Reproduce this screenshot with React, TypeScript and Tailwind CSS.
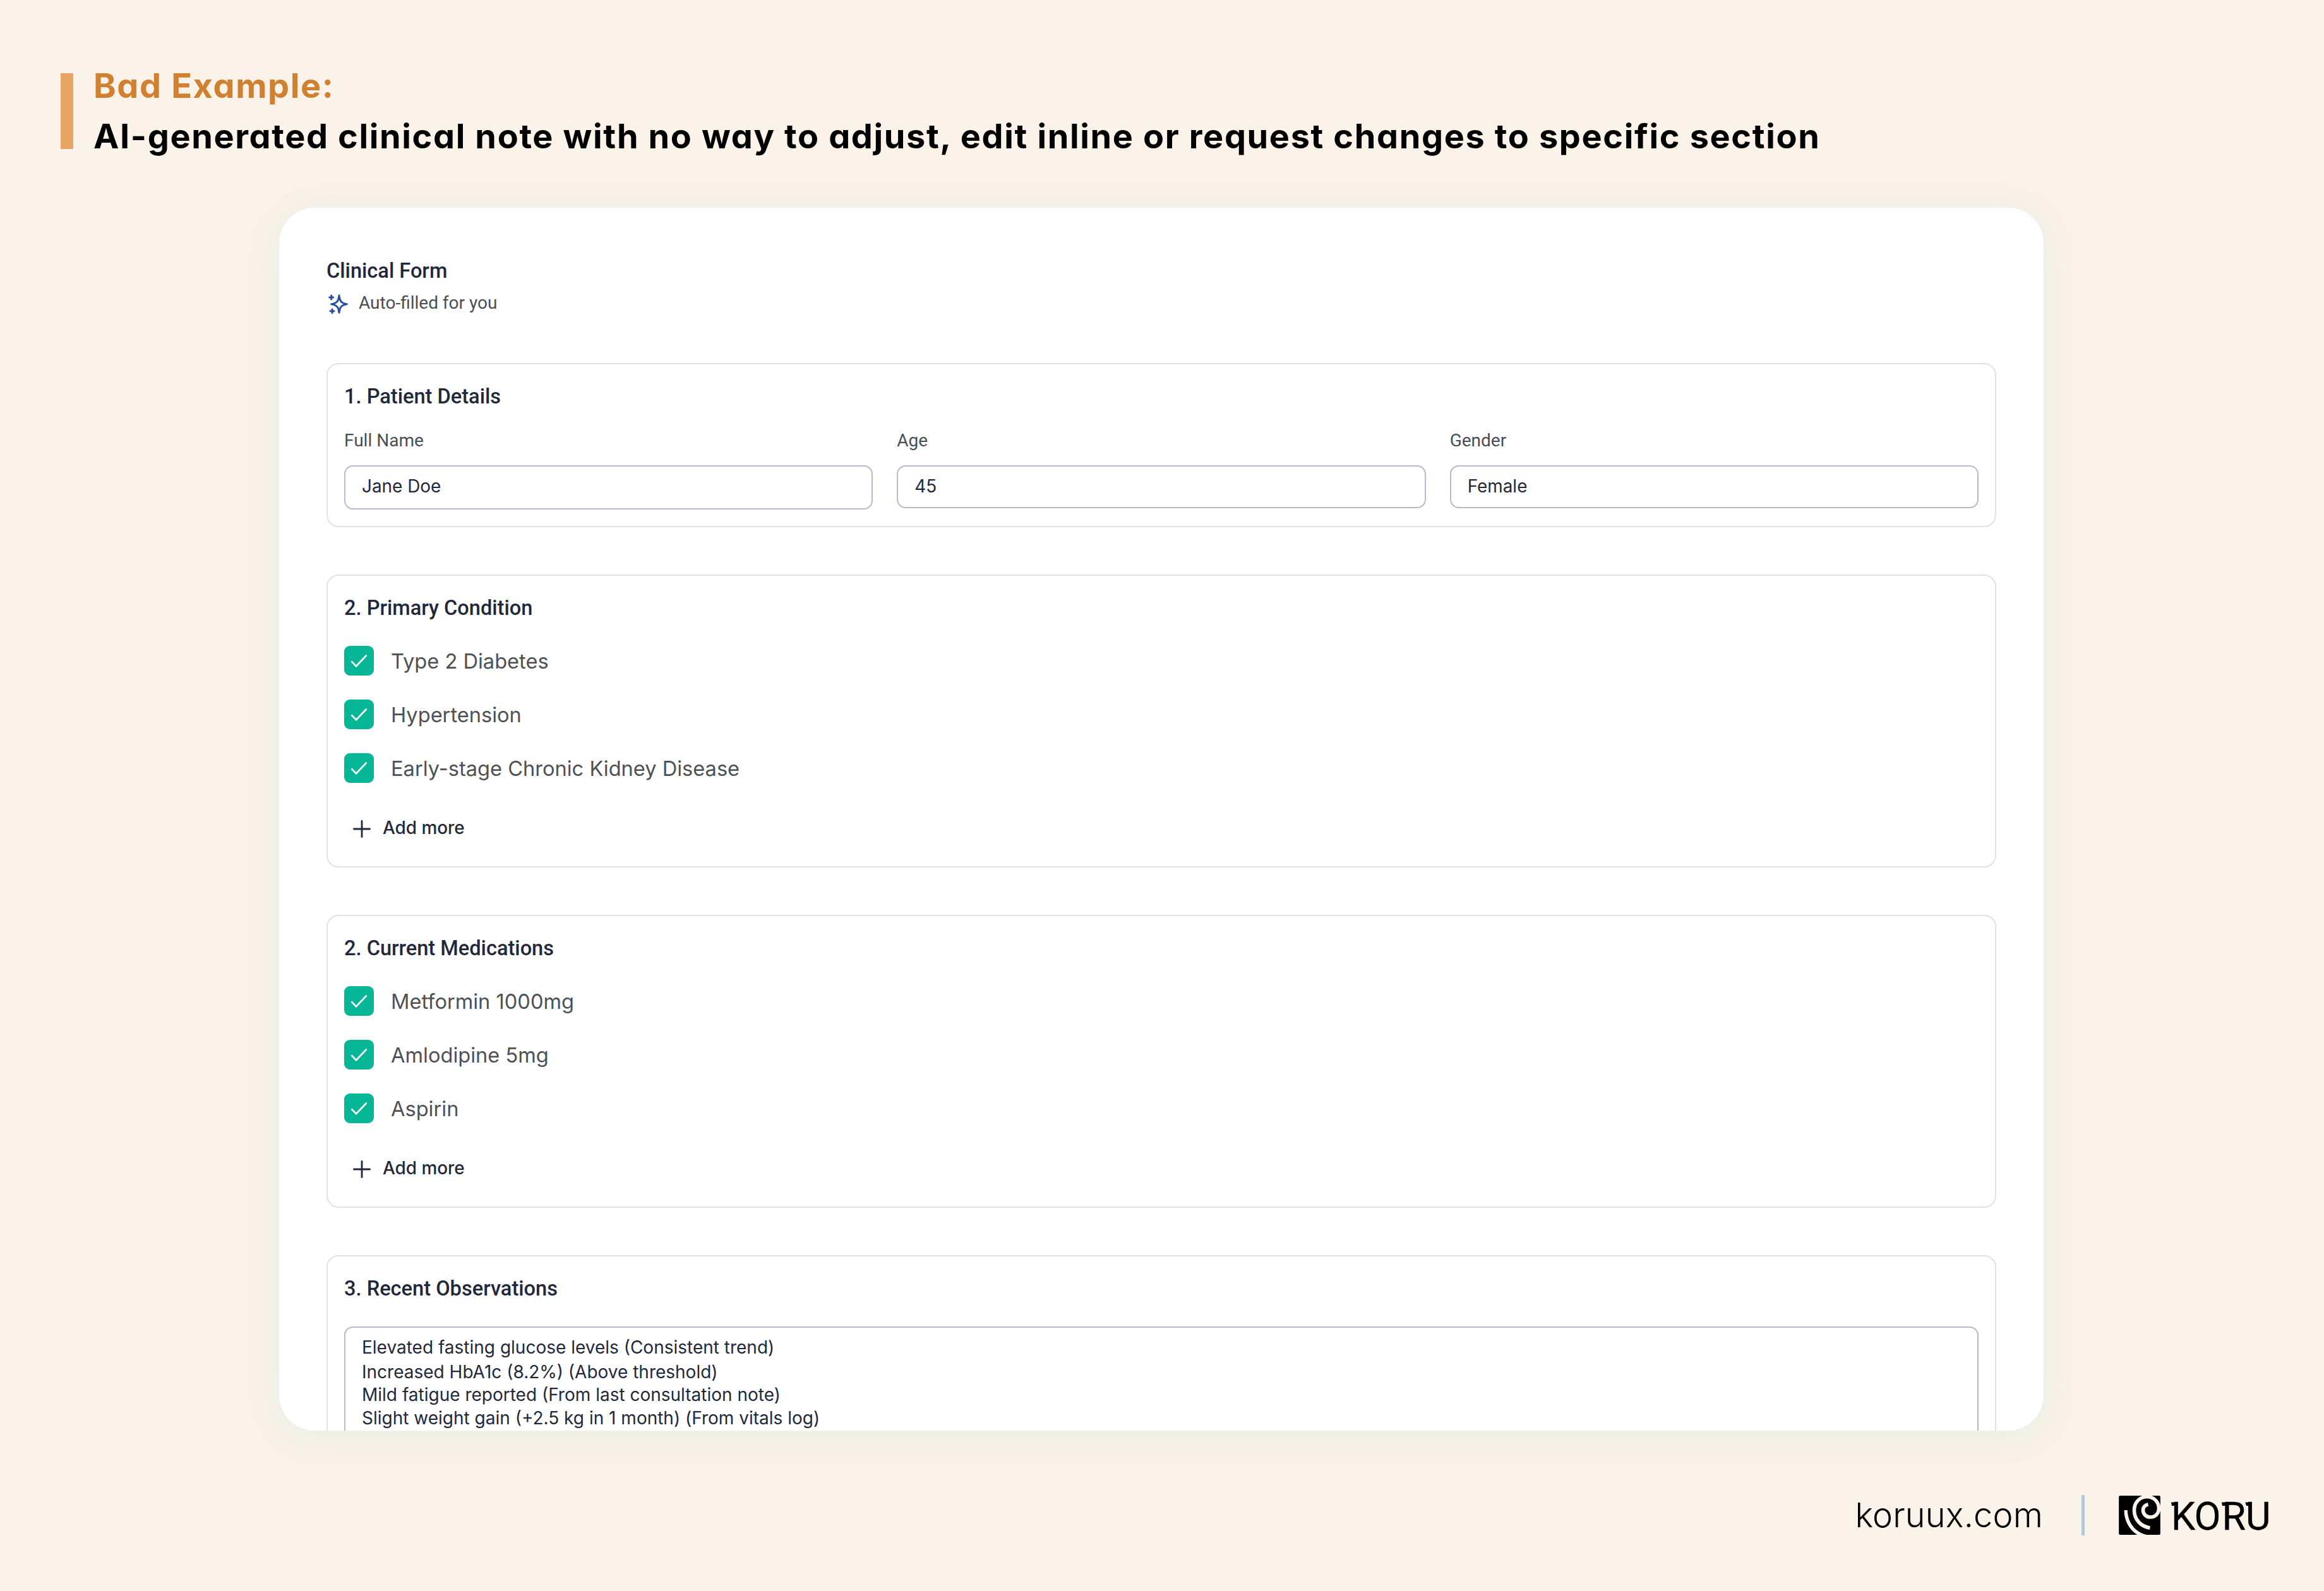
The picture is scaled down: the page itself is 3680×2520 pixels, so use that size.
import type { ReactNode } from "react";

function SparkleIcon() {
  return (
    <svg className="mt-[2px] ml-[2px] size-[33px]" viewBox="57 72 99 99" fill="none" stroke="#2850a0" strokeWidth="9" strokeLinecap="round" strokeLinejoin="round">
      <path d="M111 81C114 108 122 118 148 122C122 126 114 136 111 163C108 136 100 126 74 122C100 118 108 108 111 81Z" />
      <path d="M74 81V99M65 90H83M78 146V164M69 155H87" />
    </svg>
  );
}

function CheckBox() {
  return (
    <span className="flex size-[47px] shrink-0 rounded-[9px] bg-[#05b797]">
      <svg className="size-full" viewBox="0 0 20 20" fill="none" stroke="#fff" strokeWidth="1.15" strokeLinecap="round" strokeLinejoin="round">
        <path d="M5.2 10.7L8.1 13.7L14.8 6.6" />
      </svg>
    </span>
  );
}

function Section({ title, className, children }: { title: string; className: string; children: ReactNode }) {
  return (
    <section className={`flex shrink-0 flex-col rounded-[19px] border-2 border-[#dfe2ec] px-[26px] pt-[31px] ${className}`}>
      <h2 className="font-['Roboto',sans-serif] text-[32.6px] leading-[40px] font-medium text-[#1f293b]">{title}</h2>
      {children}
    </section>
  );
}

function Field({ label, value, className }: { label: string; value: string; className: string }) {
  return (
    <div className="flex flex-1 flex-col">
      <label className="font-['Roboto',sans-serif] text-[28px] leading-[40px] text-[#4b4e52]">{label}</label>
      <div className={`mt-[19px] rounded-[14px] border-2 border-[#b4bccd] pt-[11px] pl-[26px] text-[27.9px] leading-[40px] text-[#1f293b] ${className}`}>
        {value}
      </div>
    </div>
  );
}

function CheckList({ items }: { items: string[] }) {
  return (
    <>
      <div className="mt-[40px] flex flex-col gap-[38px]">
        {items.map((item) => (
          <div key={item} className="flex h-[47px] items-center gap-[27px]">
            <CheckBox />
            <span className="pt-[2px] text-[32.6px] leading-[47px] text-[#4e5155]">{item}</span>
          </div>
        ))}
      </div>
      <div className="mt-[51px] ml-[14px] flex items-center gap-[19px]">
        <svg className="mt-[3px] size-[28px]" viewBox="0 0 28 28" stroke="#1f293b" strokeWidth="2.8" strokeLinecap="round">
          <path d="M14 1.4V26.6M1.4 14H26.6" />
        </svg>
        <span className="text-[27.9px] leading-[40px] font-medium text-[#1f293b]">Add more</span>
      </div>
    </>
  );
}

function KoruMark() {
  return (
    <svg className="h-[62px] w-[66px]" viewBox="14 15 197 186">
      <rect x="14" y="15" width="197" height="186" rx="6" fill="#000" />
      <path d="M153 56C136 60 129 72 129 84C129 103 144 117 163 117C187 117 204 100 204 76C204 45 180 20 148 20C112 20 87 48 87 84C87 130 120 162 162 168" fill="none" stroke="#fbf2e9" strokeWidth="17" />
      <path d="M39 84H55C56 140 90 190 150 202H103C65 180 39 135 39 84Z" fill="#fbf2e9" />
    </svg>
  );
}

function KoruWordmark() {
  return (
    <svg className="ml-[13px] h-[86px] w-[163px]" viewBox="-4 -12 163 86">
      <g fontFamily="Roboto, sans-serif" fontSize="61" stroke="#000" strokeWidth="0.4">
        <text x="0" y="54">K</text>
        <text x="36.5" y="54">O</text>
        <text x="80.5" y="54">R</text>
        <text x="118" y="54">U</text>
      </g>
      <path d="M0 10.5H8V16H1ZM80 10.5H90V16H81ZM117.500 10.5H127V16H119Z" />
    </svg>
  );
}

export default function App() {
  return (
    <div className="flex h-[2520px] w-[3680px] flex-col overflow-hidden bg-[#fbf2e9] font-['Inter',sans-serif]">
      <header className="flex gap-[32px] pt-[96px] pl-[96px]">
        <div className="mt-[20px] h-[120px] w-[20px] bg-[#e7a462]" />
        <div className="text-[54px] leading-[80px] font-bold tracking-[1.64px] [font-feature-settings:'cv11']">
          <p className="text-[#d0812f]">Bad Example:</p>
          <h1 className="whitespace-nowrap text-black">
            AI-generated clinical note with no way to adjust, edit inline or request changes to specific section
          </h1>
        </div>
      </header>

      <main className="mt-[73px] ml-[442px] flex h-[1937px] w-[2794px] shrink-0 flex-col overflow-hidden rounded-[56px] bg-white px-[75px] pt-[80px] shadow-[0_9px_56px_rgba(195,235,222,0.4)]">
        <h2 className="font-['Roboto',sans-serif] text-[32.6px] leading-[40px] font-medium text-[#1f293b]">Clinical Form</h2>
        <div className="mt-[11px] flex h-[40px] items-center gap-[16px]">
          <SparkleIcon />
          <span className="font-['Roboto',sans-serif] text-[28px] leading-[40px] text-[#4b4e52]">Auto-filled for you</span>
        </div>

        <div className="mt-[75px] flex flex-col gap-[75px]">
          <Section title="1. Patient Details" className="h-[260px]">
            <div className="mt-[30px] flex gap-[38px]">
              <Field label="Full Name" value="Jane Doe" className="h-[70px]" />
              <Field label="Age" value="45" className="h-[68px]" />
              <Field label="Gender" value="Female" className="h-[68px]" />
            </div>
          </Section>
          <Section title="2. Primary Condition" className="h-[464px]">
            <CheckList items={["Type 2 Diabetes", "Hypertension", "Early-stage Chronic Kidney Disease"]} />
          </Section>
          <Section title="2. Current Medications" className="h-[464px]">
            <CheckList items={["Metformin 1000mg", "Amlodipine 5mg", "Aspirin"]} />
          </Section>
          <Section title="3. Recent Observations" className="h-[400px]">
            <div className="mt-[40px] h-[260px] rounded-[14px] border-2 border-[#b4bccd] pt-[11px] pl-[26px] text-[28px] leading-[36.4px] text-[#1f293b]">
              <p className="leading-[41px]">Elevated fasting glucose levels (Consistent trend)</p>
              <p>Increased HbA1c (8.2%) (Above threshold)</p>
              <p>Mild fatigue reported (From last consultation note)</p>
              <p>Slight weight gain (+2.5 kg in 1 month) (From vitals log)</p>
            </div>
          </Section>
        </div>
      </main>

      <footer className="mt-[102px] flex h-[64px] items-center justify-end pr-[83px]">
        <span className="text-[54px] leading-[64px] font-light tracking-[0.2px] text-black [font-feature-settings:'cv11']">koruux.com</span>
        <div className="mr-[54px] ml-[61px] h-[64px] w-[5px] bg-[#b0cad8]" />
        <KoruMark />
        <KoruWordmark />
      </footer>
    </div>
  );
}
